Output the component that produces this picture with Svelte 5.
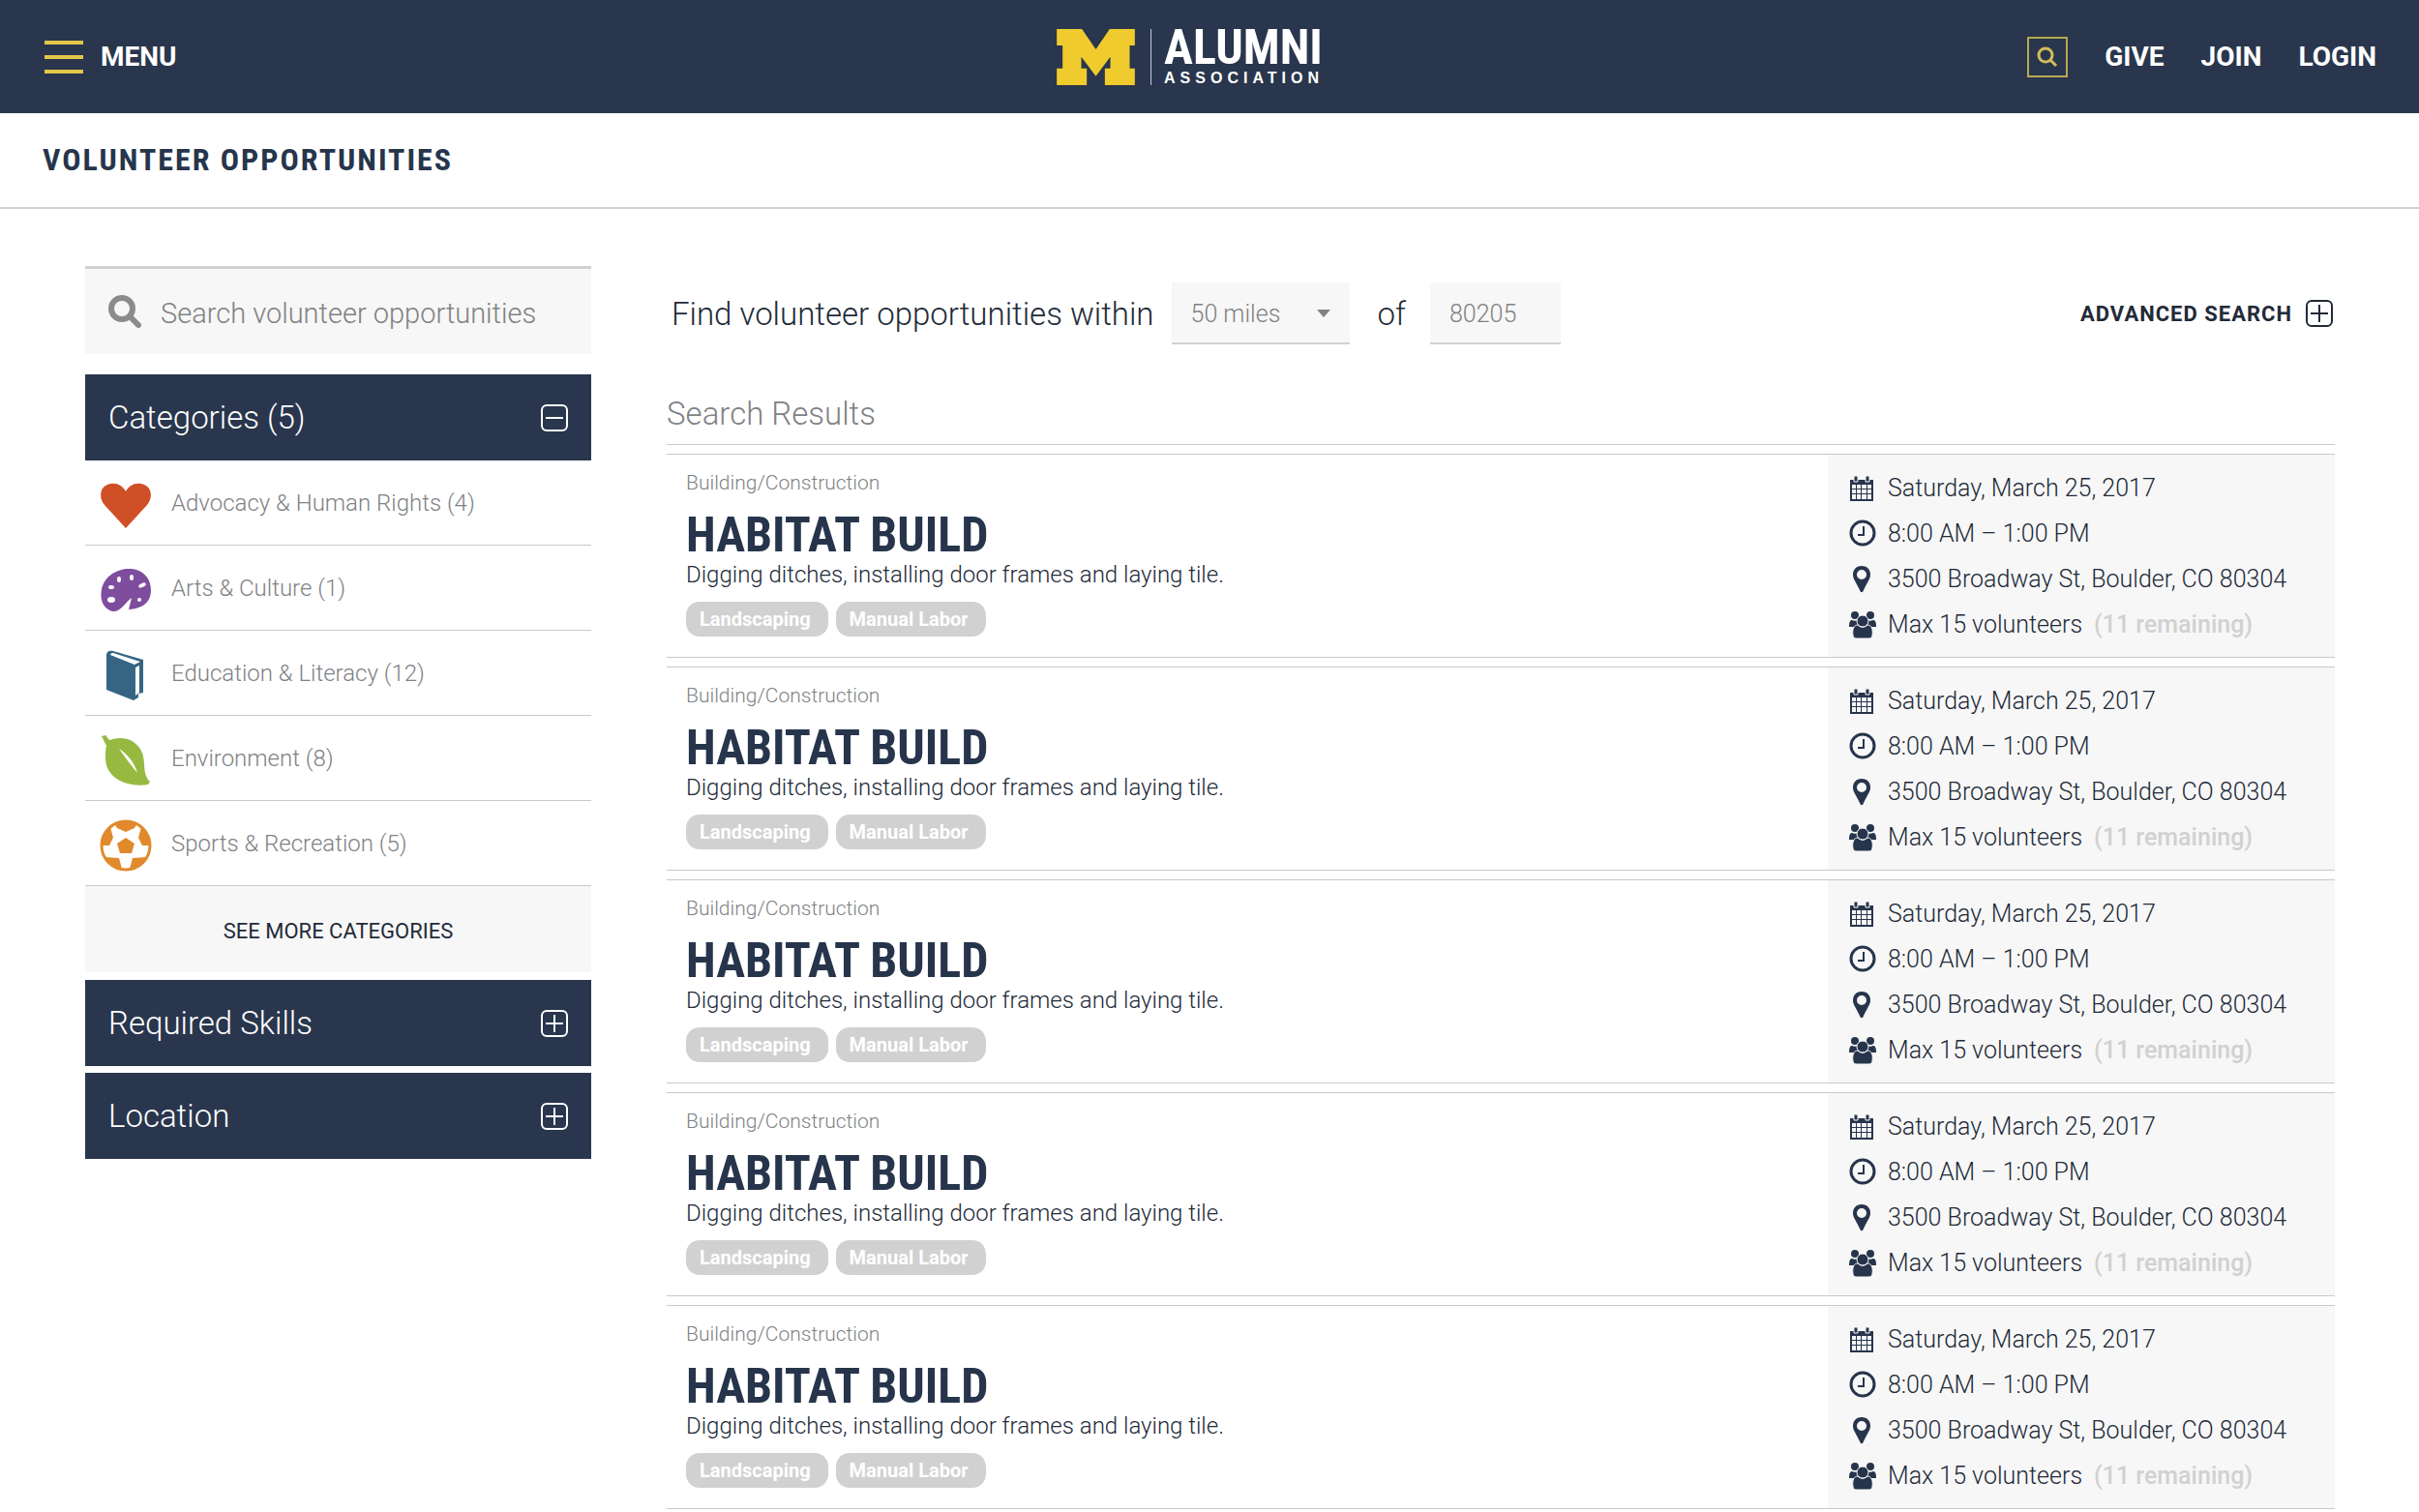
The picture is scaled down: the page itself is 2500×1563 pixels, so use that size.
<script>
  let categories = [
    { name: "Advocacy & Human Rights", count: 4, icon: "heart" },
    { name: "Arts & Culture", count: 1, icon: "palette" },
    { name: "Education & Literacy", count: 12, icon: "book" },
    { name: "Environment", count: 8, icon: "leaf" },
    { name: "Sports & Recreation", count: 5, icon: "ball" },
  ];

  let result = {
    category: "Building/Construction",
    title: "Habitat Build",
    description: "Digging ditches, installing door frames and laying tile.",
    tags: ["Landscaping", "Manual Labor"],
    date: "Saturday, March 25, 2017",
    time: "8:00 AM – 1:00 PM",
    address: "3500 Broadway St, Boulder, CO 80304",
    max: 15,
    remaining: 11,
  };
  let results = Array.from({ length: 5 }, () => result);

  let query = "";
  let distance = "50";
  let zip = "80205";
  let open = { categories: true, skills: false, location: false };
</script>

{#snippet toggle(expanded)}
  <svg class="toggle" viewBox="0 0 28 28" aria-hidden="true">
    <rect x="1" y="1" width="26" height="26" rx="5" />
    <path d={expanded ? "M5 14h18" : "M5 14h18M14 5v18"} />
  </svg>
{/snippet}

{#snippet categoryIcon(icon)}
  <svg class="category-icon" viewBox="0 0 54 54" aria-hidden="true">
    {#if icon == "heart"}
      <path
        fill="#cf4f26"
        d="M27 51L5 27C-1 20 0 9 8 6c8-3 15 0 19 7C31 6 38 3 46 6c8 3 9 14 3 21z"
      />
    {:else if icon == "palette"}
      <path
        fill="#7e4d9e"
        d="M13 49C3 46 0 36 2 26 5 12 19 4 33 5c12 1 20 10 20 22 0 13-9 19-23 20l3-12c-7 5-11 15-20 14z"
      />
      <g fill="#fff">
        <ellipse cx="12" cy="37" rx="4" ry="3" />
        <ellipse cx="12" cy="24" rx="3" ry="2" />
        <ellipse cx="20" cy="16" rx="2" ry="3" />
        <ellipse cx="33" cy="14" rx="2" ry="3" />
        <ellipse cx="44" cy="22" rx="4" ry="2" transform="rotate(-25 44 22)" />
        <circle cx="41" cy="37" r="2" />
      </g>
    {:else if icon == "book"}
      <path
        fill="#366584"
        d="M7 6c0-4 4-5 7-4l31 9v34l-5 1v4l-5 3-28-11z"
      />
      <path fill="#fff" d="M11 6c1-3 4-2 6-1l25 8-6 3zM37 19l4-2v28l-4 3z" />
    {:else if icon == "leaf"}
      <path
        fill="#97b942"
        d="M2 2l4-1 4 5c13-5 27-1 33 11 5 10 1 21 7 30l2 2-2 3C32 55 6 48 6 24c0-5 0-9 1-12z"
      />
      <path fill="#fff" d="M20 15c8 5 16 14 19 25C32 32 26 23 20 15z" />
    {:else}
      <circle cx="27" cy="27" r="25" fill="#fff" stroke="#e08a2c" stroke-width="3" />
      <g fill="#e08a2c">
        <path d="M27 19l9 6-3 10H21l-3-10z" />
        <path d="M15 4c7-4 17-4 24 0l-3 5-9 4-9-4z" />
        <path d="M2 27L4 16l7-8 3 11-4 8zM52 27l-2-11-7-8-3 11 4 8z" />
        <path d="M6 39l14 1 3 11c-8-2-14-6-17-12zM48 39l-14 1-3 11c8-2 14-6 17-12z" />
      </g>
    {/if}
  </svg>
{/snippet}

<header>
  <button class="menu">
    <svg width="40" height="36" viewBox="0 0 40 36" aria-hidden="true">
      <path d="M0 3h40M0 18h40M0 33h40" stroke="#e3c64a" stroke-width="4" />
    </svg>
    Menu
  </button>

  <a class="logo" href="/" aria-label="Michigan Alumni Association">
    <svg width="81" height="58" viewBox="0 0 242 174" aria-hidden="true">
      <path
        fill="#f0cb2e"
        d="M0 0h78l43 63 43-63h78v51h-16v71h16v52h-93v-52h17V86l-45 60-45-60v36h17v52H0v-52h18V51H0z"
      />
    </svg>
    <span class="wordmark">
      <span class="alumni">ALUMNI</span>
      <span class="association">ASSOCIATION</span>
    </span>
  </a>

  <nav>
    <button class="site-search" aria-label="Search">
      <svg width="22" height="22" viewBox="0 0 22 22" aria-hidden="true">
        <circle cx="9" cy="9" r="7" />
        <path d="M14 14l6 6" />
      </svg>
    </button>
    <a href="/give">Give</a>
    <a href="/join">Join</a>
    <a href="/login">Login</a>
  </nav>
</header>

<h1>Volunteer Opportunities</h1>

<div class="page">
  <aside>
    <label class="search">
      <svg width="34" height="34" viewBox="0 0 34 34" aria-hidden="true">
        <circle cx="14" cy="14" r="11" />
        <path d="M22 22l9 9" />
      </svg>
      <input
        type="text"
        aria-label="Search volunteer opportunities"
        placeholder="Search volunteer opportunities"
        bind:value={query}
      />
    </label>

    <button class="panel" on:click={() => (open.categories = !open.categories)}>
      Categories ({categories.length})
      {@render toggle(open.categories)}
    </button>
    {#if open.categories}
      <ul>
        {#each categories as { name, count, icon }}
          <li>
            {@render categoryIcon(icon)}
            <a href="/volunteer/{icon}">{name} ({count})</a>
          </li>
        {/each}
      </ul>
      <button class="more">See more categories</button>
    {/if}
    <button class="panel" on:click={() => (open.skills = !open.skills)}>
      Required Skills
      {@render toggle(open.skills)}
    </button>
    <button class="panel" on:click={() => (open.location = !open.location)}>
      Location
      {@render toggle(open.location)}
    </button>
  </aside>

  <main>
    <form>
      <label for="distance">Find volunteer opportunities within</label>
      <span class="select">
        <select id="distance" bind:value={distance}>
          <option value="10">10 miles</option>
          <option value="25">25 miles</option>
          <option value="50">50 miles</option>
        </select>
        <svg width="14" height="8" viewBox="0 0 14 8" aria-hidden="true">
          <path d="M0 0h14L7 8z" fill="#808285" />
        </svg>
      </span>
      <label for="zip">of</label>
      <input id="zip" type="text" bind:value={zip} />
      <button type="button" class="advanced">
        Advanced Search
        {@render toggle(false)}
      </button>
    </form>

    <h2>Search Results</h2>

    {#each results as item}
      <article>
        <div class="summary">
          <p class="category">{item.category}</p>
          <h3>{item.title}</h3>
          <p class="description">{item.description}</p>
          <div class="tags">
            {#each item.tags as tag}
              <span class="tag">{tag}</span>
            {/each}
          </div>
        </div>
        <ul class="details">
          <li>
            <svg viewBox="0 0 28 28" aria-hidden="true">
              <path d="M1 5h24v22H1z" />
              <path
                fill="#f7f7f7"
                d="M3 10h4v4H3zM8 10h4v4H8zM13 10h5v4h-5zM19 10h4v4h-4zM3 15h4v4H3zM8 15h4v4H8zM13 15h5v4h-5zM19 15h4v4h-4zM3 20h4v5H3zM8 20h4v5H8zM13 20h5v5h-5zM19 20h4v5h-4z"
              />
              <path d="M5 1h4v6H5zM17 1h4v6h-4z" stroke="#f7f7f7" />
            </svg>
            {item.date}
          </li>
          <li>
            <svg viewBox="0 0 28 28" aria-hidden="true">
              <circle cx="14" cy="13" r="12" fill="none" stroke="#27354c" stroke-width="3" />
              <path d="M15 6v9H9" fill="none" stroke="#27354c" stroke-width="2" />
            </svg>
            {item.time}
          </li>
          <li>
            <svg viewBox="0 0 28 28" aria-hidden="true">
              <path
                fill-rule="evenodd"
                d="M13 0c6 0 9 4 9 9 0 4-2 6-7 16-1 3-3 3-4 0C6 15 4 13 4 9c0-5 3-9 9-9zm0 4a5 5 0 1 0 0 10 5 5 0 0 0 0-10z"
              />
            </svg>
            {item.address}
          </li>
          <li>
            <svg viewBox="0 0 28 28" aria-hidden="true">
              <circle cx="6" cy="4" r="4" />
              <circle cx="22" cy="4" r="4" />
              <path d="M0 16c0-5 1-7 3-7 2 1 4 1 6 0-1 3 0 5 2 7zM28 16c0-5-1-7-3-7-2 1-4 1-6 0 1 3 0 5-2 7z" />
              <path
                stroke="#f7f7f7"
                d="M9 14c-4 0-6 4-5 11 0 2 2 3 4 3h12c2 0 4-1 4-3 1-7-1-11-5-11-3 3-7 3-10 0z"
              />
              <circle cx="14" cy="10" r="6" stroke="#f7f7f7" />
            </svg>
            Max {item.max} volunteers
            <strong>({item.remaining} remaining)</strong>
          </li>
        </ul>
      </article>
    {/each}
  </main>
</div>

<style>
  :global(body) {
    margin: 0;
    background: #fff;
    color: #222a38;
    font-family: Roboto, "Liberation Sans", sans-serif;
    font-size: 24px;
    font-weight: 300;
  }
  button,
  input,
  select {
    padding: 0;
    border: 0;
    border-radius: 0;
    background: none;
    color: inherit;
    font: inherit;
  }
  button {
    cursor: pointer;
  }
  a {
    color: inherit;
    text-decoration: none;
  }
  ul {
    margin: 0;
    padding: 0;
    list-style: none;
  }

  header {
    display: grid;
    grid-template-columns: 1fr auto 1fr;
    align-items: center;
    height: 117px;
    padding: 0 44px;
    background: #29364d;
    color: #fff;
    font-size: 28px;
    font-weight: 700;
    text-transform: uppercase;
  }
  .menu {
    display: flex;
    align-items: center;
    gap: 18px;
    text-transform: uppercase;
  }
  .menu svg {
    margin-left: 2px;
  }
  .logo {
    display: flex;
    align-items: center;
    margin-right: 40px;
  }
  .wordmark {
    display: flex;
    flex-direction: column;
    justify-content: space-between;
    height: 58px;
    margin-left: 16px;
    padding-left: 13px;
    border-left: 1px solid #c6cbd3;
  }
  .alumni {
    font-family: "Roboto Condensed", Roboto, sans-serif;
    font-size: 50px;
    line-height: 38px;
  }
  .association {
    font-family: "Liberation Sans", sans-serif;
    font-size: 16px;
    line-height: 14px;
    letter-spacing: 5px;
  }
  nav {
    display: flex;
    align-items: center;
    justify-content: flex-end;
    gap: 38px;
  }
  .site-search {
    display: grid;
    place-items: center;
    width: 42px;
    height: 42px;
    border: 2px solid #b5a94f;
  }
  .site-search svg {
    fill: none;
    stroke: #d3bd5a;
    stroke-width: 3;
  }

  h1,
  h3 {
    margin: 0;
    color: #27354c;
    font-family: "Roboto Condensed", Roboto, sans-serif;
    font-weight: 700;
    text-transform: uppercase;
  }
  h1 {
    padding: 0 44px;
    border-bottom: 2px solid #d1d1d1;
    font-size: 32px;
    line-height: 97px;
    letter-spacing: 2px;
  }

  .page {
    display: grid;
    grid-template-columns: 523px 1fr;
    gap: 78px;
    padding: 59px 87px 0 88px;
  }

  .search {
    display: flex;
    align-items: center;
    gap: 20px;
    height: 88px;
    margin-bottom: 21px;
    padding: 0 24px;
    border-top: 3px solid #d1d1d1;
    background: #f7f7f7;
    font-size: 29px;
  }
  .search svg {
    flex: none;
    fill: none;
    stroke: #8b8b8b;
    stroke-width: 6;
    stroke-linecap: round;
  }
  .search input {
    width: 100%;
    padding-top: 3px;
  }
  .search input::placeholder {
    color: #808285;
    opacity: 1;
  }
  .toggle {
    width: 28px;
    height: 28px;
    fill: none;
    stroke: currentColor;
    stroke-width: 2;
  }
  .panel {
    display: flex;
    align-items: center;
    justify-content: space-between;
    width: 100%;
    height: 89px;
    padding: 0 24px;
    background: #29364d;
    color: #fff;
    font-size: 33px;
  }
  .panel + .panel {
    margin-top: 7px;
  }
  aside li {
    display: flex;
    align-items: center;
    gap: 20px;
    height: 87px;
    padding-left: 15px;
    border-bottom: 1px solid #c9c9c9;
    color: #808285;
  }
  .category-icon {
    width: 54px;
    height: 54px;
    padding-top: 4px;
  }
  .more {
    width: 100%;
    height: 89px;
    margin-bottom: 8px;
    padding-top: 4px;
    background: #f7f7f7;
    font-size: 22px;
    font-weight: 400;
    text-transform: uppercase;
  }

  form {
    display: flex;
    align-items: center;
    height: 64px;
    margin-top: 17px;
    padding: 0 2px 0 5px;
    font-size: 33px;
  }
  .select {
    display: flex;
    align-items: center;
    width: 184px;
    margin: 0 29px 0 18px;
    position: relative;
  }
  .select svg {
    position: absolute;
    right: 20px;
    pointer-events: none;
  }
  select,
  #zip {
    box-sizing: border-box;
    height: 64px;
    padding: 2px 20px 0;
    border-bottom: 2px solid #d1d1d1;
    background: #f7f7f7;
    color: #808285;
    font-size: 25px;
  }
  select {
    width: 100%;
    appearance: none;
  }
  #zip {
    width: 135px;
    margin-left: 25px;
  }
  .advanced {
    display: flex;
    align-items: center;
    gap: 14px;
    margin-left: auto;
    font-size: 22px;
    font-weight: 700;
    letter-spacing: 1px;
    text-transform: uppercase;
  }

  h2 {
    margin: 53px 0 9px;
    padding-bottom: 12px;
    border-bottom: 1px solid #c9c9c9;
    color: #808285;
    font-size: 33px;
    font-weight: 300;
    line-height: 38px;
  }
  article {
    display: flex;
    height: 209px;
    margin-bottom: 9px;
    border: solid #c9c9c9;
    border-width: 1px 0;
  }
  .summary {
    flex: 1;
    padding: 15px 20px 0;
  }
  .summary p {
    margin: 0;
  }
  .category {
    color: #808285;
    font-size: 21px;
    line-height: 28px;
  }
  h3 {
    padding-top: 13px;
    font-size: 50px;
    line-height: 54px;
  }
  .description {
    line-height: 28px;
  }
  .tags {
    display: flex;
    gap: 8px;
    margin-top: 14px;
  }
  .tag {
    padding: 0 18px 0 14px;
    border-radius: 14px;
    background: #d1d1d1;
    color: #fff;
    font-size: 20px;
    font-weight: 700;
    line-height: 36px;
  }
  .details {
    flex: none;
    box-sizing: border-box;
    width: 524px;
    padding: 11px 22px;
    background: #f7f7f7;
    font-size: 25px;
  }
  .details li {
    display: flex;
    align-items: center;
    gap: 12px;
    height: 47px;
  }
  .details svg {
    width: 28px;
    height: 28px;
    fill: #27354c;
    overflow: visible;
  }
  .details strong {
    color: #d1d1d1;
    font-weight: 500;
  }
</style>
